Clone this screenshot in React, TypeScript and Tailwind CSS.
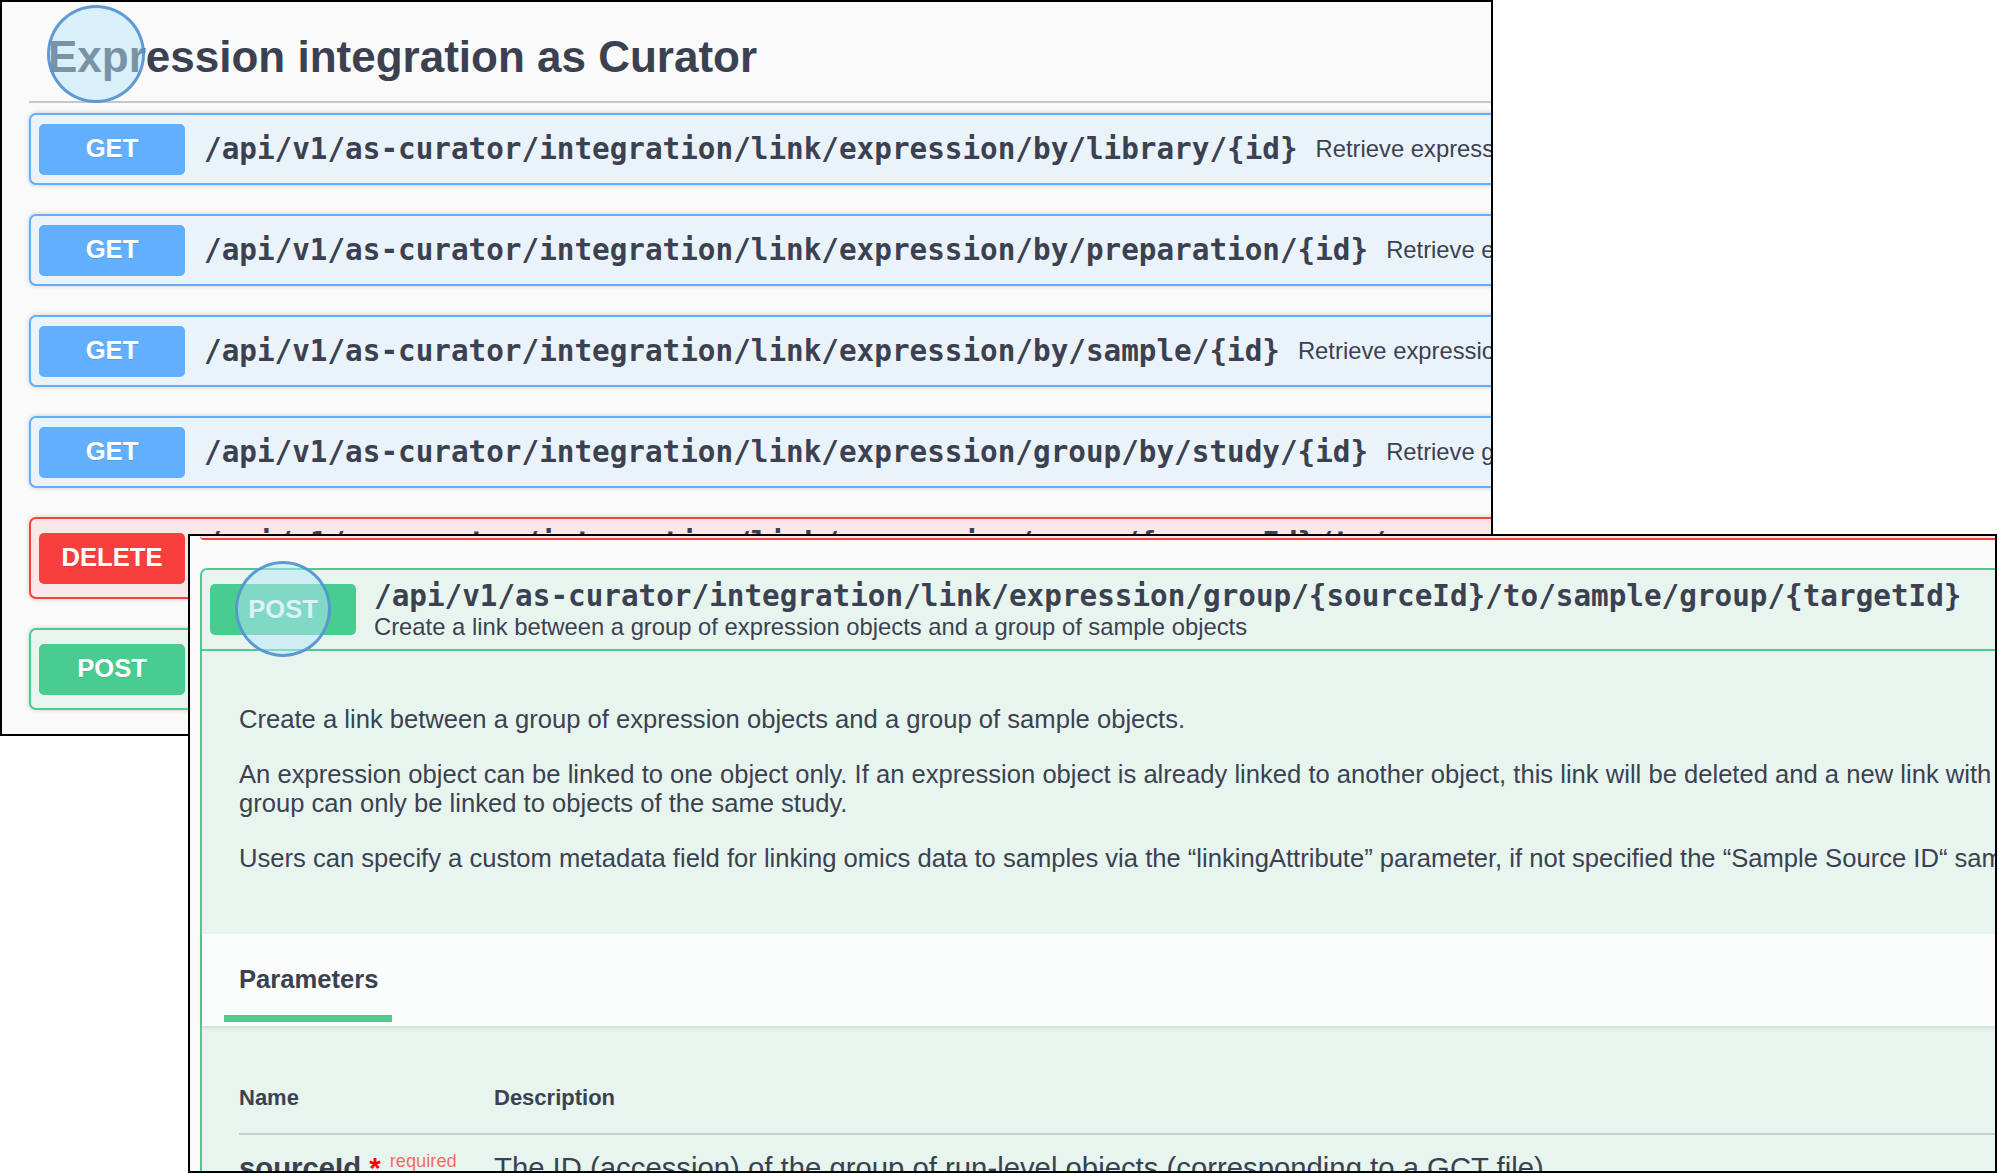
import React from "react";

const sans = "font-['Liberation_Sans',Arial,Helvetica,sans-serif]";
const mono = "font-['DejaVu_Sans_Mono','Liberation_Mono',monospace]";

type Method = "GET" | "DELETE" | "POST";

const methodStyles: Record<Method, { row: string; btn: string }> = {
  GET: { row: "border-[#61affe] bg-[#ebf3fa]", btn: "bg-[#61affe]" },
  DELETE: { row: "border-[#f93e3e] bg-[#fae7e7]", btn: "bg-[#f93e3e]" },
  POST: { row: "border-[#49cc90] bg-[#e8f5ef]", btn: "bg-[#49cc90]" },
};

const endpoints: { method: Method; path: string[]; desc: string; tall?: boolean }[] = [
  { method: "GET", path: ["/api/v1/as-curator/integration/link/expression/by/library/{id}"], desc: "Retrieve expression data linked to a library" },
  { method: "GET", path: ["/api/v1/as-curator/integration/link/expression/by/preparation/{id}"], desc: "Retrieve expression data linked to a preparation" },
  { method: "GET", path: ["/api/v1/as-curator/integration/link/expression/by/sample/{id}"], desc: "Retrieve expression data linked to a sample" },
  { method: "GET", path: ["/api/v1/as-curator/integration/link/expression/group/by/study/{id}"], desc: "Retrieve groups of expression data by study" },
  {
    method: "DELETE",
    path: ["/api/v1/as-curator/integration/link/expression/group/{sourceId}/to/sa", "mple/group/{targetId}"],
    desc: "Delete a link between a group of expression objects and a group of sample objects",
    tall: true,
  },
  {
    method: "POST",
    path: ["/api/v1/as-curator/integration/link/expression/group/{sourceId}/to/sa", "mple/group/{targetId}"],
    desc: "Create a link between a group of expression objects and a group of sample objects",
    tall: true,
  },
];

function MethodBadge({ method }: { method: Method }) {
  return (
    <span
      className={`flex h-[51px] w-[146px] shrink-0 items-center justify-center rounded-[5px] text-[25.6px] font-bold leading-none text-white [text-shadow:0_1px_0_rgba(0,0,0,0.1)] ${methodStyles[method].btn}`}
    >
      {method}
    </span>
  );
}

function Operation({ method, path, desc, tall }: { method: Method; path: string[]; desc: string; tall?: boolean }) {
  return (
    <div
      className={`flex items-center rounded-[7px] border-2 px-[8px] shadow-[0_0_5px_rgba(0,0,0,0.19)] ${methodStyles[method].row} ${tall ? "h-[82px]" : "h-[72px]"}`}
    >
      <MethodBadge method={method} />
      <div className={`pl-[19px] pr-[18px] ${mono} whitespace-nowrap text-[29.3px] font-bold leading-[30px] text-[#3b4151]`}>
        {path.map((line) => (
          <div key={line}>{line}</div>
        ))}
      </div>
      <div className="whitespace-nowrap text-[23.8px] text-[#3b4151]">{desc}</div>
    </div>
  );
}

function Highlight({ className }: { className: string }) {
  return (
    <div
      className={`pointer-events-none absolute rounded-full border-[3px] border-[rgba(80,146,206,0.9)] bg-[rgba(183,230,250,0.5)] ${className}`}
    />
  );
}

export default function App() {
  return (
    <div className={`relative h-[1174px] w-[1999px] overflow-hidden bg-white ${sans} text-[#3b4151]`}>
      {/* first window: tag overview */}
      <section className="absolute left-0 top-0 h-[736px] w-[1493px] overflow-hidden border-2 border-black bg-[#fafafa]">
        <div className="flex w-[2400px] flex-col pl-[27px]">
          <h2 className="border-b-2 border-[#c4c6cb] pb-[19px] pl-[19px] pt-[30px] text-[44px] font-bold leading-[50px]">
            Expression integration as Curator
          </h2>
          <div className="mt-[10px] flex flex-col gap-[29px]">
            {endpoints.map((e) => (
              <Operation key={e.method + e.path[0]} {...e} />
            ))}
          </div>
        </div>
      </section>

      {/* second window: expanded POST operation */}
      <section className="absolute left-[188px] top-[534px] h-[639px] w-[1809px] overflow-hidden border-2 border-black bg-[#fafafa]">
        <div className="w-[2400px] pl-[10px]">
          <div className="h-[4px] rounded-b-[7px] border-b-2 border-[#f93e3e] bg-[#fae7e7]" />
          <div className="mt-[28px] rounded-t-[7px] border-2 border-[#49cc90] bg-[#e8f5ef]">
            <div className="flex items-center border-b-2 border-[#49cc90] px-[8px] py-[9px]">
              <MethodBadge method="POST" />
              <div className="flex flex-col pl-[18px]">
                <span className={`${mono} whitespace-nowrap text-[29.3px] font-bold leading-[34px]`}>
                  /api/v1/as-curator/integration/link/expression/group/{"{sourceId}"}/to/sample/group/{"{targetId}"}
                </span>
                <span className="whitespace-nowrap text-[23.8px] leading-[27px]">
                  Create a link between a group of expression objects and a group of sample objects
                </span>
              </div>
            </div>

            <div className="flex flex-col gap-[25px] px-[37px] pb-[61px] pt-[54px] text-[25.6px] leading-[29.5px]">
              <p className="whitespace-nowrap">Create a link between a group of expression objects and a group of sample objects.</p>
              <p className="whitespace-nowrap">
                <span className="block">
                  An expression object can be linked to one object only. If an expression object is already linked to another object, this link will be deleted and a new link with the given object will be created. Objects of an expression
                </span>
                <span className="block">group can only be linked to objects of the same study.</span>
              </p>
              <p className="whitespace-nowrap">
                Users can specify a custom metadata field for linking omics data to samples via the “linkingAttribute” parameter, if not specified the “Sample Source ID“ sample metadata field is used.
              </p>
            </div>

            <div className="relative bg-[rgba(255,255,255,0.8)] pb-[4px] pl-[22px] pt-[31px] shadow-[0_2px_4px_rgba(0,0,0,0.1)]">
              <div className="flex w-[168px] flex-col">
                <span className="pl-[15px] text-[25.6px] font-bold leading-[29.5px]">Parameters</span>
                <span className="mt-[20.5px] h-[7px] bg-[#49cc90]" />
              </div>
            </div>

            <div className="px-[37px]">
              <div className="flex border-b-2 border-[#c6cdcc] pb-[23.5px] pt-[58.5px] text-[22px] font-bold leading-[25px]">
                <span className="w-[255px] shrink-0">Name</span>
                <span>Description</span>
              </div>
              <div className="flex pt-[16px]">
                <div className="w-[255px] shrink-0 whitespace-nowrap text-[29.3px] font-bold leading-[34px]">
                  sourceId<span className="text-[#ff0000]">&nbsp;*</span>
                  <span className="relative -top-[11px] px-[9px] text-[18.3px] font-normal text-[rgba(255,0,0,0.6)]">required</span>
                </div>
                <p className="whitespace-nowrap text-[29.3px] leading-[34px]">
                  The ID (accession) of the group of run-level objects (corresponding to a GCT file)
                </p>
              </div>
            </div>
          </div>
        </div>
      </section>

      <Highlight className="left-[47px] top-[5px] h-[98px] w-[98px]" />
      <Highlight className="left-[235px] top-[561px] h-[96px] w-[96px]" />
    </div>
  );
}
